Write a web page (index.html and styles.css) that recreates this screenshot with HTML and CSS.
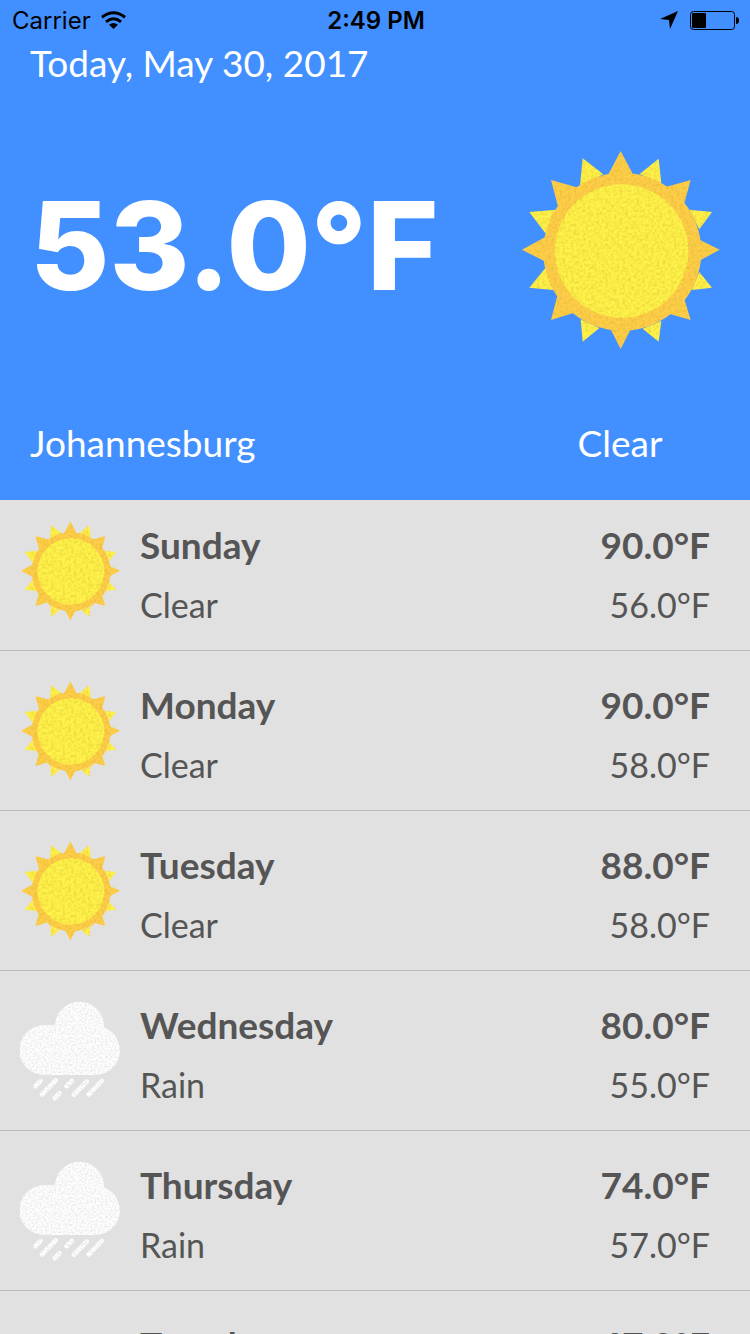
FILE: index.html
```html
<!DOCTYPE html>
<html lang="en">
<head>
<meta charset="utf-8">
<meta name="viewport" content="width=device-width, initial-scale=1">
<title>Weather</title>
<link rel="stylesheet" href="styles.css">
</head>
<body>
<svg class="defs" aria-hidden="true">
  <defs>
    <filter id="grain-dark" x="0" y="0" width="100%" height="100%" color-interpolation-filters="sRGB">
      <feTurbulence type="fractalNoise" baseFrequency="0.35" numOctaves="2" seed="4" result="noise"/>
      <feColorMatrix in="noise" type="matrix" values="0 0 0 0 0.7  0 0 0 0 0.6  0 0 0 0 0.1  0.6 0 0 0 -0.23" result="spots"/>
      <feComposite in="spots" in2="SourceAlpha" operator="in" result="grain"/>
      <feMerge><feMergeNode in="SourceGraphic"/><feMergeNode in="grain"/></feMerge>
    </filter>
    <filter id="grain-light" x="0" y="0" width="100%" height="100%" color-interpolation-filters="sRGB">
      <feTurbulence type="fractalNoise" baseFrequency="0.55" numOctaves="2" seed="7" result="noise"/>
      <feColorMatrix in="noise" type="matrix" values="0 0 0 0 0.82  0 0 0 0 0.82  0 0 0 0 0.82  1.2 0 0 0 -0.45" result="spots"/>
      <feComposite in="spots" in2="SourceAlpha" operator="in" result="grain"/>
      <feMerge><feMergeNode in="SourceGraphic"/><feMergeNode in="grain"/></feMerge>
    </filter>
    <symbol id="sun" viewBox="30 30 600 600">
      <path fill="#fff14a" d="M218 55 280 103 210 138ZM446 56 389 102 454 130ZM606 216 538 209 568 268ZM606 443 568 396 545 450ZM446 605 398 566 454 543ZM218 605 268 564 212 538ZM58 443 106 384 130 450ZM58 216 139 209 106 280Z"/>
      <circle cx="337" cy="335" r="237" fill="#ffce49"/>
      <path fill="#ffce49" d="M332 33 370 105 294 105ZM542 120 523 190 465 142ZM629 329 572 360 570 300ZM542 540 480 522 524 480ZM332 627 303 570 361 570ZM123 540 142 468 190 519ZM36 329 110 289 110 367ZM123 120 205 143 145 203Z"/>
      <circle cx="335" cy="333" r="200" fill="#fff24a"/>
    </symbol>
    <symbol id="rain" viewBox="30 33 300 300">
      <path fill="#fff" d="M103 105H135A73 73 0 1 1 282 112A74 74 0 0 1 255 255H103A75 75 0 0 1 103 105Z"/>
      <path stroke="#fff" stroke-width="14" stroke-linecap="round" fill="none" d="M91 273 76 289M137 271 96 313M185 273 170 289M148 310 134 325M230 275 192 314M275 273 236 314"/>
    </symbol>
  </defs>
</svg>
<div class="app">
  <header class="current">
    <div class="status">
      <div class="status-left">
        <span>Carrier</span>
        <svg class="wifi" viewBox="0 0 25 18" role="img" aria-label="Wi-Fi">
          <g fill="none" stroke="#000" stroke-width="3">
            <path d="M1 6.2Q12.5-2.8 24 6.2"/>
            <path d="M5 10.8Q12.5 4.6 20 10.8"/>
          </g>
          <path d="M8 13.8Q12.5 10 17 13.8L12.5 18Z"/>
        </svg>
      </div>
      <time class="clock">2:49 PM</time>
      <div class="status-right">
        <svg class="arrow" viewBox="0 0 18 18" role="img" aria-label="Location"><path d="M18 0 10 18 9 9 0 8Z"/></svg>
        <svg class="battery" viewBox="0 0 50 19" role="img" aria-label="Battery">
          <rect x=".5" y=".5" width="44" height="18" rx="3" fill="none" stroke="#000"/>
          <rect x="2" y="2" width="14" height="15" rx="1"/>
          <path d="M46 6Q49 6 49 9.500T46 13Z"/>
        </svg>
      </div>
    </div>
    <div class="summary">
      <div class="date">Today, May 30, 2017</div>
      <h1 class="now">53.0°F</h1>
      <svg class="now-icon" filter="url(#grain-dark)" aria-hidden="true"><use href="#sun"/></svg>
      <div class="city">Johannesburg</div>
      <div class="sky">Clear</div>
    </div>
  </header>
  <ul class="forecast">
    <li class="day">
      <svg class="icon" filter="url(#grain-dark)" aria-hidden="true"><use href="#sun"/></svg>
      <div class="lines"><strong>Sunday</strong><span>Clear</span></div>
      <div class="lines temps"><strong>90.0°F</strong><span>56.0°F</span></div>
    </li>
    <li class="day">
      <svg class="icon" filter="url(#grain-dark)" aria-hidden="true"><use href="#sun"/></svg>
      <div class="lines"><strong>Monday</strong><span>Clear</span></div>
      <div class="lines temps"><strong>90.0°F</strong><span>58.0°F</span></div>
    </li>
    <li class="day">
      <svg class="icon" filter="url(#grain-dark)" aria-hidden="true"><use href="#sun"/></svg>
      <div class="lines"><strong>Tuesday</strong><span>Clear</span></div>
      <div class="lines temps"><strong>88.0°F</strong><span>58.0°F</span></div>
    </li>
    <li class="day">
      <svg class="icon" filter="url(#grain-light)" aria-hidden="true"><use href="#rain"/></svg>
      <div class="lines"><strong>Wednesday</strong><span>Rain</span></div>
      <div class="lines temps"><strong>80.0°F</strong><span>55.0°F</span></div>
    </li>
    <li class="day">
      <svg class="icon" filter="url(#grain-light)" aria-hidden="true"><use href="#rain"/></svg>
      <div class="lines"><strong>Thursday</strong><span>Rain</span></div>
      <div class="lines temps"><strong>74.0°F</strong><span>57.0°F</span></div>
    </li>
    <li class="day">
      <div class="icon"></div>
      <div class="lines"><strong>Tuesday</strong></div>
      <div class="lines temps"><strong>67.0°F</strong></div>
    </li>
  </ul>
</div>
</body>
</html>
```

FILE: styles.css
```css
* {
  box-sizing: border-box;
}

body {
  margin: 0;
  font-family: Lato, "Open Sans", sans-serif;
  font-size: 37px;
  background: #e1e1e1;
}

.defs {
  position: absolute;
  width: 0;
  height: 0;
}

.app {
  display: flex;
  flex-direction: column;
  height: 100vh;
}

.current {
  flex: none;
  background: #4290ff;
  color: #fff;
}

.status {
  display: grid;
  grid-template-columns: 1fr auto 1fr;
  align-items: center;
  height: 40px;
  padding: 0 10px 0 12px;
  font-family: Inter, sans-serif;
  font-size: 24px;
  color: #000;
}

.status-left,
.status-right {
  display: flex;
  align-items: center;
  gap: 12px;
}

.status-left {
  gap: 10px;
}

.status-right {
  justify-content: flex-end;
}

.clock {
  font-weight: 600;
}

.wifi {
  width: 25px;
  height: 18px;
}

.arrow {
  width: 18px;
  height: 18px;
}

.battery {
  width: 50px;
  height: 19px;
}

.summary {
  display: grid;
  grid-template-columns: 1fr 200px;
  align-items: center;
  padding: 0 30px 34px;
  line-height: 46px;
}

.date {
  grid-column: 1 / -1;
}

.now {
  margin: 0 0 14px;
  font-family: Inter, Lato, sans-serif;
  font-size: 122px;
  font-weight: 800;
  line-height: 200px;
}

.now-icon {
  width: 200px;
  height: 200px;
  margin: 64px 0 70px;
}

.sky {
  text-align: center;
}

.forecast {
  flex: 1;
  min-height: 0;
  margin: 0;
  padding: 0;
  overflow: hidden;
  list-style: none;
  color: #555;
}

.day {
  display: grid;
  grid-template-columns: 100px 1fr auto;
  column-gap: 20px;
  align-items: start;
  padding: 30px 40px 21px 20px;
  border-bottom: 1px solid #bababc;
}

.day:first-child {
  padding-top: 21px;
}

.icon {
  width: 100px;
  height: 100px;
}

.lines {
  display: grid;
  gap: 12px;
  line-height: 48px;
}

.lines span {
  font-size: 34px;
}

.temps {
  text-align: right;
}
```
